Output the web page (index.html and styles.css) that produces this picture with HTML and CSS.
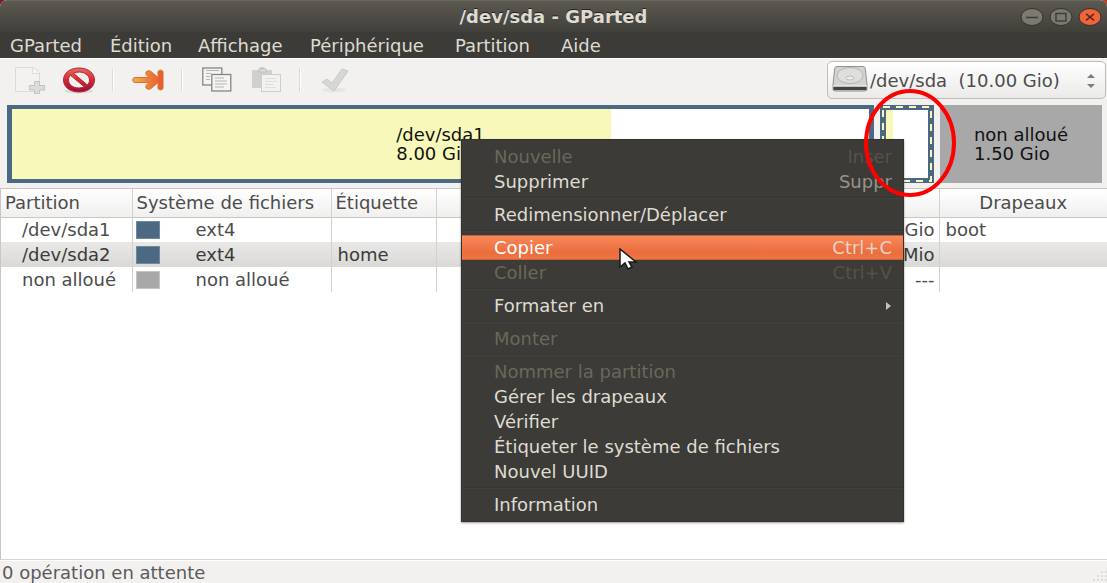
FILE: index.html
```html
<!DOCTYPE html>
<html lang="fr">
<head>
  <meta charset="UTF-8">
  <meta name="viewport" content="width=device-width, initial-scale=1.0">
  <title>/dev/sda - GParted</title>
  <link rel="stylesheet" href="styles.css">
</head>
<body>
  <div class="window">
    <header class="titlebar">
      <h1>/dev/sda - GParted</h1>
      <div class="window-buttons">
        <button aria-label="Réduire"><svg width="24" height="20" viewBox="0 0 24 20"><ellipse cx="12" cy="10" rx="11" ry="8.5" fill="#7b7970" stroke="#33322e"/><path d="M6 10.500h12" stroke="#3c3b37" stroke-width="1.300"/></svg></button>
        <button aria-label="Agrandir"><svg width="24" height="20" viewBox="0 0 24 20"><ellipse cx="12" cy="10" rx="11" ry="8.5" fill="#7b7970" stroke="#33322e"/><rect x="7" y="6.500" width="10" height="7.500" fill="none" stroke="#3c3b37" stroke-width="1.400"/></svg></button>
        <button aria-label="Fermer"><svg width="24" height="20" viewBox="0 0 24 20"><ellipse cx="12" cy="10" rx="11" ry="8.5" fill="#f0643a" stroke="#33322e"/><path d="M8 6.800l8 6.600M16 6.800l-8 6.600" stroke="#5a2a1a" stroke-width="1.500"/></svg></button>
      </div>
    </header>

    <nav class="menubar">
      <button>GParted</button>
      <button>Édition</button>
      <button>Affichage</button>
      <button>Périphérique</button>
      <button>Partition</button>
      <button>Aide</button>
    </nav>

    <div class="toolbar">
      <button aria-label="Nouvelle" disabled>
        <svg width="34" height="30" viewBox="0 0 34 30">
          <path d="M2.500 2.500h18l6 5v19h-24z" fill="#f3f2f1" stroke="#dcdbd8"/>
          <path d="M20 3l-1 5.500h7" fill="#f8f8f7" stroke="#dcdbd8"/>
          <path d="M21.500 16.500h5v4h5v4.500h-5v3.500h-5v-3.500h-5v-4.500h5z" fill="#dcddd8" stroke="#c2c3be"/>
        </svg>
      </button>
      <button aria-label="Supprimer">
        <svg width="36" height="30" viewBox="0 0 36 30">
          <defs><linearGradient id="stop" x1="0" y1="0" x2="0" y2="1"><stop offset="0" stop-color="#ea6a62"/><stop offset=".5" stop-color="#d32a35"/><stop offset="1" stop-color="#930f3a"/></linearGradient></defs>
          <ellipse cx="18" cy="26" rx="14" ry="2.500" fill="#dddcda"/>
          <path fill-rule="evenodd" d="M18 3C9 3 2.500 8 2.500 15S9 27 18 27s15.500-5 15.500-12S27 3 18 3zM18 7c2 0 4 .4 5.600 1.100L24 8.500C27 10 28.500 12.300 28.500 15c0 2-.8 3.600-2.200 4.900L12.500 8.300C14.100 7.500 16 7 18 7zM9.500 10.300L23.300 21.800C21.800 22.500 20 23 18 23c-6 0-10.500-3.500-10.500-8 0-1.800.7-3.400 2-4.700z" fill="url(#stop)" stroke="#ba2433"/>
        </svg>
      </button>
      <span class="sep"></span>
      <button aria-label="Redimensionner">
        <svg width="34" height="24" viewBox="0 0 34 24">
          <defs><linearGradient id="arrow"><stop offset="0" stop-color="#f5ad4b"/><stop offset="1" stop-color="#e9582d"/></linearGradient></defs>
          <path d="M4 9.500h14l-3-3c-1-3 2-5 5-3l7 6V4c0-2.500 5-2.500 5 0v16c0 2.500-5 2.500-5 0v-5.500l-7 6c-3 2-6 0-5-3l3-3H4c-3 0-3-5 0-5z" fill="url(#arrow)" stroke="#d9712c"/>
        </svg>
      </button>
      <span class="sep"></span>
      <button aria-label="Copier">
        <svg width="32" height="28" viewBox="0 0 32 28">
          <g fill="#f4f4f3" stroke="#858683" stroke-width="1.300">
            <rect x="1.800" y="2" width="19" height="17"/>
            <rect x="10.800" y="8.500" width="19" height="16.500"/>
          </g>
          <path d="M5 4.500h13M5 7.500h5M5 10.500h4M5 13.500h4M14 12h9M14 15h12M14 18h12M14 21h9" stroke="#b5b6b3"/>
        </svg>
      </button>
      <button aria-label="Coller" disabled>
        <svg width="32" height="28" viewBox="0 0 32 28">
          <path d="M2 4h7l1-3h4l1 3h7v18H2z" fill="#d0d0ce"/>
          <path d="M9 3h7v3H9z" fill="#e3e3e1" stroke="#bbb"/>
          <rect x="11.500" y="8.500" width="19" height="17" fill="#f2f2f0" stroke="#cdcdca"/>
          <path d="M15 12.500h11M15 15.500h12M15 18.500h9M15 21.500h11" stroke="#dededb"/>
        </svg>
      </button>
      <span class="sep"></span>
      <button aria-label="Appliquer" disabled>
        <svg width="32" height="28" viewBox="0 0 32 28">
          <ellipse cx="15" cy="24" rx="12" ry="2.500" fill="#e7e6e4"/>
          <path d="M3 16l5-3 5 4L23 3l6 2-14 20z" fill="#d5d7d2" stroke="#c9cac6" stroke-linejoin="round"/>
        </svg>
      </button>

      <div class="device">
        <svg class="disk-icon" width="36" height="28" viewBox="0 0 36 28">
          <path d="M5 1.500h26q2 0 2.300 2L35 20v4q0 2-2 2H3q-2 0-2-2v-4L2.700 3.500q.3-2 2.300-2z" fill="#d3d4d2" stroke="#929390"/>
          <path d="M1.500 21.500h33v3.500h-33z" fill="#444"/>
          <path d="M1 21h34" stroke="#f7f7f7"/>
          <ellipse cx="18" cy="10.500" rx="13" ry="8" fill="#dededd" stroke="#b5b5b3"/>
          <ellipse cx="18" cy="13" rx="4" ry="2" fill="#eee" stroke="#bbb"/>
        </svg>
        <select aria-label="Périphérique">
          <option>/dev/sda&nbsp; (10.00 Gio)</option>
        </select>
        <svg class="arrows" width="10" height="16" viewBox="0 0 10 16"><path d="M1 5l4-4 4 4zM1 11l4 4 4-4z" fill="#7d7c79"/></svg>
      </div>
    </div>

    <div class="disk" style="grid-template-columns: 867fr 54fr 162fr">
      <div class="part">
        <div class="used" style="width: 69.9%"></div>
        <p>/dev/sda1<br>8.00 Gio</p>
      </div>
      <div class="part selected">
        <div class="used" style="width: 16%"></div>
        <svg class="dashes"><rect width="100%" height="100%"/></svg>
      </div>
      <div class="part unallocated">
        <p>non alloué<br>1.50 Gio</p>
      </div>
    </div>

    <main>
      <table>
        <colgroup>
          <col class="c-part"><col class="c-fs"><col class="c-label"><col><col class="c-flags">
        </colgroup>
        <thead>
          <tr>
            <th>Partition</th>
            <th>Système de fichiers</th>
            <th>Étiquette</th>
            <th></th>
            <th class="center">Drapeaux</th>
          </tr>
        </thead>
        <tbody>
          <tr>
            <td class="name">/dev/sda1</td>
            <td><span class="fs"><i class="swatch"></i>ext4</span></td>
            <td></td>
            <td class="size">Gio</td>
            <td>boot</td>
          </tr>
          <tr class="active">
            <td class="name">/dev/sda2</td>
            <td><span class="fs"><i class="swatch"></i>ext4</span></td>
            <td>home</td>
            <td class="size">Mio</td>
            <td></td>
          </tr>
          <tr>
            <td class="name">non alloué</td>
            <td><span class="fs"><i class="swatch none"></i>non alloué</span></td>
            <td></td>
            <td class="size">---</td>
            <td></td>
          </tr>
        </tbody>
      </table>
    </main>

    <footer>
      <span>0 opération en attente</span>
      <svg class="grip" width="16" height="14" viewBox="0 0 16 14"><path d="M10 3h2M6 7h2M10 7h2M14 7h2M14 3h2M2 11h2M6 11h2M10 11h2M14 11h2" stroke="#dfdedb" stroke-width="2"/></svg>
    </footer>
  </div>

  <!-- right click menu of the selected partition -->
  <div class="context-menu">
    <button disabled>Nouvelle <kbd>Inser</kbd></button>
    <button>Supprimer <kbd>Suppr</kbd></button>
    <hr>
    <button>Redimensionner/Déplacer</button>
    <hr>
    <button class="hover">Copier <kbd>Ctrl+C</kbd></button>
    <button disabled>Coller <kbd>Ctrl+V</kbd></button>
    <hr>
    <button>Formater en <svg width="6" height="8" viewBox="0 0 6 8"><path d="M0 0l5 4-5 4z" fill="#c5c2b9"/></svg></button>
    <hr>
    <button disabled>Monter</button>
    <hr>
    <button disabled>Nommer la partition</button>
    <button>Gérer les drapeaux</button>
    <button>Vérifier</button>
    <button>Étiqueter le système de fichiers</button>
    <button>Nouvel UUID</button>
    <hr>
    <button>Information</button>
  </div>

  <svg class="circle" width="94" height="110" viewBox="0 0 94 110"><ellipse cx="47" cy="55" rx="44" ry="52" fill="none" stroke="#fe0000" stroke-width="4"/></svg>
  <svg class="cursor" width="20" height="24" viewBox="0 0 20 24"><path d="M1 1v18l5-4 3 6 4-2-3-5h7z" fill="#fff" stroke="#1a1a1a" stroke-width="1.500"/></svg>
</body>
</html>
```
FILE: styles.css
```css
* {
  box-sizing: border-box;
}
body {
  margin: 0;
  background: linear-gradient(to right, #8d1026, #b8391f);
  font-family: "DejaVu Sans", sans-serif;
  font-size: 18px;
  color: #4c4c4c;
}
button {
  padding: 0;
  border: none;
  background: none;
  font: inherit;
  color: inherit;
}
svg {
  display: block;
}
.window {
  display: flex;
  flex-direction: column;
  min-height: 100vh;
  background: #f2f1f0;
  border-radius: 7px 7px 0 0;
  overflow: hidden;
}

/* title and menu bar */
.titlebar {
  display: grid;
  grid-template-columns: 1fr auto 1fr;
  align-items: center;
  height: 32px;
  padding: 0 5px;
  background: linear-gradient(#5c5951, #403f3a);
  border-top: 1px solid #6a675f;
}
.titlebar h1 {
  grid-column: 2;
  margin: 0;
  font-size: 18px;
  line-height: 20px;
  color: #dfdbd2;
  text-shadow: 0 -1px 0 #222;
}
.window-buttons {
  display: flex;
  justify-content: flex-end;
  gap: 5px;
}
.menubar {
  display: grid;
  grid-template-columns: 100px 88px 112px 145px 106px auto;
  height: 26px;
  padding-left: 10px;
  background: #3c3b37;
  color: #dfdbd2;
}
.menubar button {
  text-align: left;
}

/* toolbar */
.toolbar {
  display: flex;
  align-items: center;
  height: 47px;
  padding: 0 1px 4px 5px;
  border-top: 1px solid #fff;
}
.toolbar button {
  display: flex;
  align-items: center;
  justify-content: center;
  width: 49px;
  height: 38px;
}
.sep {
  width: 2px;
  height: 22px;
  margin: 0 9px;
  border-left: 1px solid #dcdad8;
  border-right: 1px solid #fff;
}
.device {
  position: relative;
  width: 279px;
  height: 38px;
  margin-left: auto;
}
.device select {
  width: 100%;
  height: 100%;
  padding: 0 0 0 42px;
  appearance: none;
  border: 1px solid #bfbdba;
  border-radius: 5px;
  background: linear-gradient(#fff, #ebeae9);
  font: inherit;
  color: #4c4c4c;
}
.disk-icon {
  position: absolute;
  left: 5px;
  top: 4px;
}
.arrows {
  position: absolute;
  right: 10px;
  top: 12px;
}

/* disk map */
.disk {
  display: grid;
  gap: 6px;
  height: 83px;
  padding: 0 5px 5px 7px;
}
.part {
  position: relative;
  display: flex;
  align-items: center;
  justify-content: center;
  border: solid #4b6983;
  border-width: 4px 5px;
  background: #fff;
  color: #111;
}
.part p {
  position: relative;
  margin: 0;
  line-height: 19px;
}
.used {
  position: absolute;
  left: 0;
  top: 0;
  height: 100%;
  background: #f8f8ba;
}
.selected {
  border-width: 5px 6px;
}
.dashes {
  position: absolute;
  left: -3px;
  top: -3px;
  width: calc(100% + 6px);
  height: calc(100% + 6px);
  overflow: visible;
}
.dashes rect {
  fill: none;
  stroke: #f8f8ba;
  stroke-width: 2;
  stroke-dasharray: 7 6;
}
.unallocated {
  border-color: #a8a8a8;
  background: #a8a8a8;
}

/* partition list */
main {
  flex: 1;
  background: #fff;
  border: 1px solid #c9c7c4;
  border-right: none;
  border-bottom-color: #d5d5ce;
}
table {
  width: 100%;
  table-layout: fixed;
  border-collapse: collapse;
}
.c-part { width: 131px; }
.c-fs { width: 199px; }
.c-label { width: 105px; }
.c-flags { width: 168px; }
th, td {
  height: 25px;
  padding: 0 4px 0 6px;
  border-right: 1px solid #d2d1cf;
  text-align: left;
  font-weight: normal;
  white-space: nowrap;
}
th:last-child, td:last-child {
  border-right: none;
}
th {
  height: 28px;
  padding: 0 4px;
  background: linear-gradient(#fff, #f0efee);
  border-bottom: 1px solid #c9c7c4;
}
th.center {
  text-align: center;
}
td.name {
  padding-left: 21px;
}
td.size {
  text-align: right;
}
.active {
  background: linear-gradient(#e9e8e7, #dad9d6);
  color: #3a3a3a;
}
.fs {
  display: flex;
  align-items: center;
  gap: 36px;
  margin-left: -3px;
}
.swatch {
  width: 24px;
  height: 18px;
  background: #4b6983;
  border: 1px solid #72879a;
}
.swatch.none {
  background: #a8a8a8;
  border-color: #c4c4c4;
}

footer {
  display: flex;
  justify-content: space-between;
  align-items: center;
  height: 23px;
  padding-left: 2px;
  border-top: 1px solid #fff;
  color: #5a5a5a;
}
.grip {
  align-self: flex-end;
}

/* context menu */
.context-menu {
  position: absolute;
  left: 461px;
  top: 139px;
  width: 443px;
  padding: 4px 0;
  background: #3c3b37;
  border: 1px solid #33322f;
  color: #dfdbd2;
  box-shadow: 0 1px 2px rgba(0, 0, 0, 0.4);
}
.context-menu button {
  display: flex;
  justify-content: space-between;
  align-items: center;
  width: 100%;
  height: 25px;
  padding: 0 11px 0 32px;
}
.context-menu button:disabled {
  color: #6b675c;
}
.context-menu kbd {
  font: inherit;
  color: #96938a;
}
.context-menu button:disabled kbd {
  color: #55524a;
}
.context-menu .hover {
  background: linear-gradient(#fa8a5c, #ea6d3d 70%, #f07746);
  color: #fff;
  box-shadow: inset 0 1px #c6603a, inset 0 -1px #c6603a;
}
.context-menu .hover kbd {
  color: #e6d2c8;
}
.context-menu hr {
  height: 2px;
  margin: 3px 1px;
  border: none;
  border-top: 1px solid #373632;
  border-bottom: 1px solid #42413c;
}

.circle {
  position: absolute;
  left: 863px;
  top: 88px;
  pointer-events: none;
}
.cursor {
  position: absolute;
  left: 619px;
  top: 248px;
  pointer-events: none;
}
```
